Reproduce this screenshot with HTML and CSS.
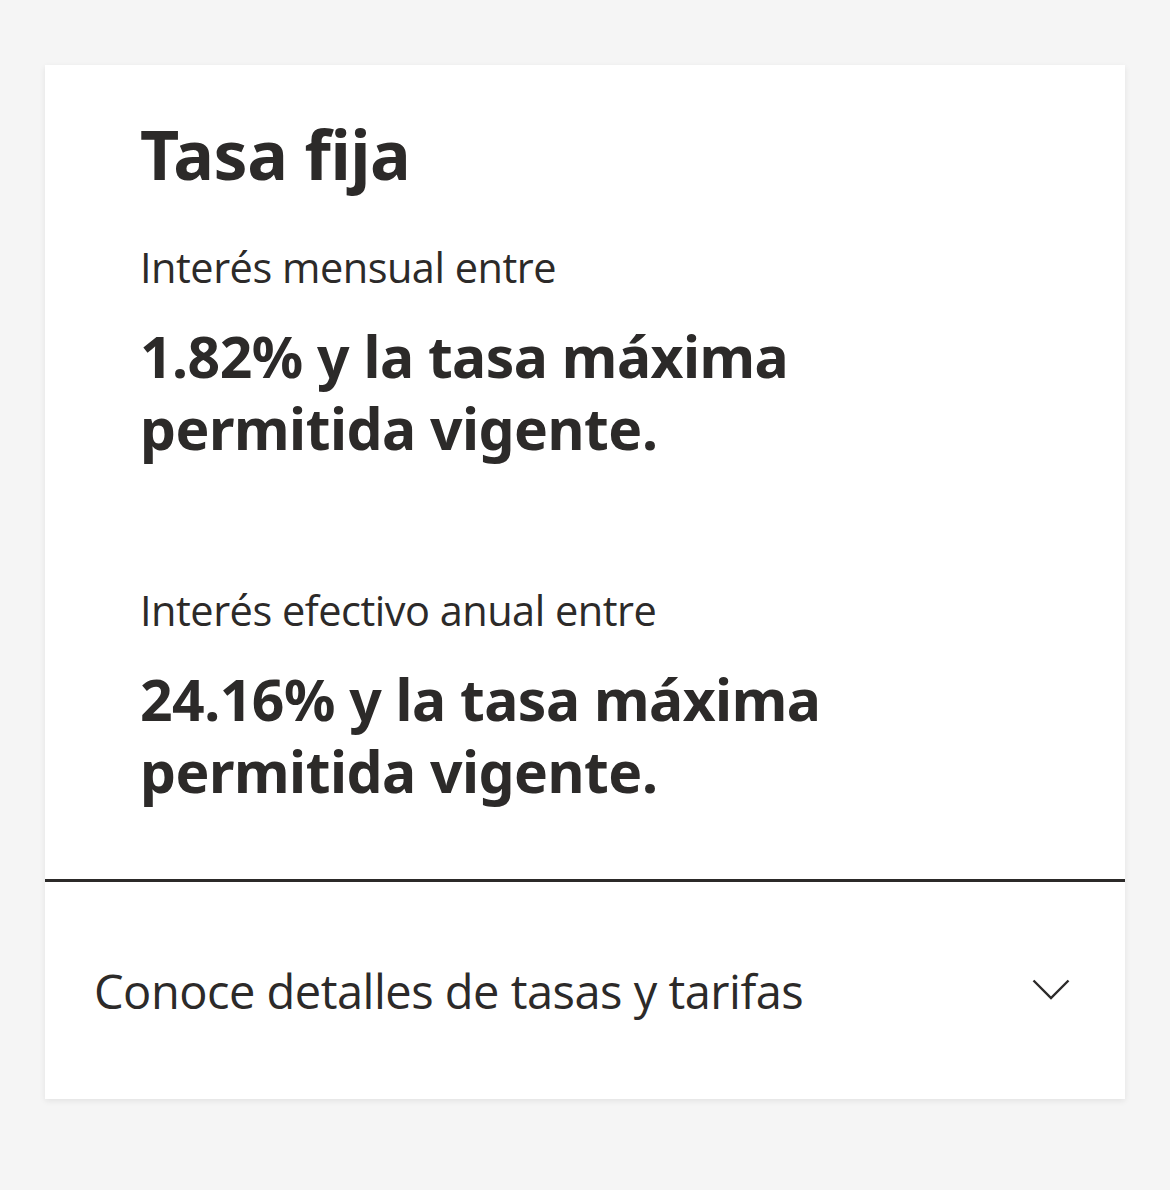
FILE: index.html
```html
<!DOCTYPE html>
<html lang="es">
<head>
<meta charset="utf-8">
<link rel="stylesheet" href="styles.css">
</head>
<body>
<div class="card">
  <div class="content">
    <h1 class="title">Tasa fija</h1>
    <div class="group">
      <p class="label">Interés mensual entre</p>
      <p class="value">1.82% y la tasa máxima<br>permitida vigente.</p>
    </div>
    <div class="group group-second">
      <p class="label">Interés efectivo anual entre</p>
      <p class="value">24.16% y la tasa máxima<br>permitida vigente.</p>
    </div>
  </div>
  <div class="accordion">
    <span class="accordion-text">Conoce detalles de tasas y tarifas</span>
    <svg class="chevron" width="38" height="22" viewBox="0 0 38 22" aria-hidden="true">
      <path d="M1.5 1.5 L19 19 L36.5 1.5" fill="none" stroke="#2c2a29" stroke-width="2.4"/>
    </svg>
  </div>
</div>
</body>
</html>
```

FILE: styles.css
```css
html, body {
  margin: 0;
  padding: 0;
}
body {
  background: #f5f5f5;
  font-family: "Open Sans", "Noto Sans", sans-serif;
  color: #2c2a29;
  padding: 65px 45px 0 45px;
  min-height: 1190px;
  box-sizing: border-box;
}
.card {
  background: #ffffff;
  box-shadow: 0 2px 6px rgba(0, 0, 0, 0.08);
}
.content {
  padding: 47px 0 72px 95px;
}
.title {
  margin: 0;
  font-family: "Noto Sans", "Open Sans", sans-serif;
  font-weight: 700;
  font-size: 68px;
  line-height: 84px;
  letter-spacing: -0.5px;
}
.group {
  margin-top: 45px;
}
.group-second {
  margin-top: 120px;
}
.label {
  margin: 0;
  font-size: 41.5px;
  font-weight: 400;
  line-height: 52px;
  letter-spacing: -0.5px;
}
.value {
  margin: 27px 0 0 0;
  font-family: "Noto Sans", "Open Sans", sans-serif;
  font-weight: 700;
  font-size: 57px;
  line-height: 72px;
  letter-spacing: -0.5px;
}
.accordion {
  border-top: 3px solid #2c2a29;
  display: flex;
  align-items: center;
  justify-content: space-between;
  padding: 0 55px 0 49px;
  height: 217px;
}
.accordion-text {
  font-size: 47px;
  line-height: 56px;
  letter-spacing: -0.5px;
}
.chevron {
  display: block;
  margin-top: -2px;
}
```
